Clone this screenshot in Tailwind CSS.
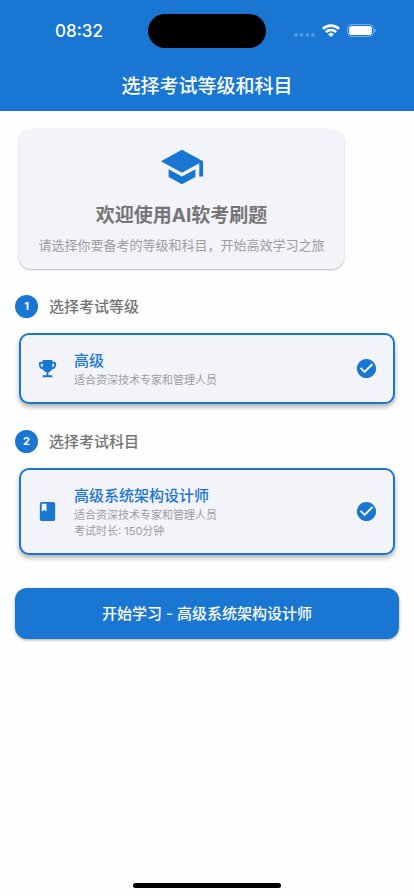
<!DOCTYPE html>
<html lang="zh-CN">
<head>
<meta charset="utf-8">
<meta name="viewport" content="width=device-width, initial-scale=1">
<title>选择考试等级和科目</title>
<script src="https://cdn.jsdelivr.net/npm/@tailwindcss/browser@4"></script>
</head>
<body class="flex min-h-screen flex-col bg-[#fefefe] font-['Inter','Noto_Sans_CJK_SC',sans-serif] text-[#757575]">
  <header class="bg-[#1976d3] text-white">
    <div class="grid h-[61px] grid-cols-[1fr_118px_1fr] items-center">
      <time class="pl-[10px] text-center text-[17px] leading-6 font-medium">08:32</time>
      <div class="h-[34px] rounded-full bg-black"></div>
      <div class="flex items-center justify-end gap-[7px] pr-[38px]">
        <svg class="mt-[9px] h-1 w-[21px]" viewBox="0 0 21 4" fill="#fff" fill-opacity=".25" aria-hidden="true"><circle cx="2" cy="2" r="1.9"/><circle cx="7.6" cy="2" r="1.9"/><circle cx="13.3" cy="2" r="1.9"/><circle cx="19" cy="2" r="1.9"/></svg>
        <svg class="h-[13px] w-[18px]" viewBox="0 0 18 13" fill="none" stroke="#fff" stroke-width="2.6" aria-hidden="true"><path d="M.9 4.9a11.6 11.6 0 0 1 16.2 0"/><path d="M3.9 8.1a7.3 7.3 0 0 1 10.2 0"/><path d="M9 13 6.2 10.2a4 4 0 0 1 5.6 0z" fill="#fff" stroke="none"/></svg>
        <svg class="h-[13px] w-[29px]" viewBox="0 0 29 13" aria-hidden="true"><rect x=".6" y=".5" width="25.8" height="12" rx="4" fill="none" stroke="#fff" stroke-opacity=".4"/><rect x="2.2" y="2" width="22.6" height="9" rx="2.6" fill="#fff"/><path d="M27.5 4.6c1.7.7 1.7 3.3 0 4z" fill="#fff" fill-opacity=".5"/></svg>
      </div>
    </div>
    <h1 class="flex h-[50px] items-center justify-center pt-[2px] text-[19px] font-medium">选择考试等级和科目</h1>
  </header>

  <main class="flex-1 px-[15px] pt-[18px]">
    <section class="mx-1 flex h-[140px] w-[325px] flex-col items-center rounded-xl bg-[#f3f3fa] pt-[15px] shadow-[0_1px_2px_rgba(0,0,0,0.28)]">
      <svg class="size-[46px]" viewBox="0 0 24 24" fill="#1976d3" aria-hidden="true"><path d="M5 13.18v4L12 21l7-3.82v-4L12 17l-7-3.82zM12 3 1 9l11 6 9-4.91V17h2V9L12 3z"/></svg>
      <h2 class="mt-[14px] text-[19px] leading-6 font-bold">欢迎使用AI软考刷题</h2>
      <p class="mt-[7px] text-[13px] leading-5 text-[#9e9e9e]">请选择你要备考的等级和科目，开始高效学习之旅</p>
    </section>

    <form>
      <fieldset class="mt-[26px]">
        <legend class="flex items-center gap-[11px] text-[15px] leading-[23px] font-medium"><span class="flex size-[23px] items-center justify-center rounded-full bg-[#1976d3] text-[11px] font-bold text-white">1</span>选择考试等级</legend>
        <label class="mx-1 mt-[15px] flex h-[71px] items-center rounded-[10px] border-2 border-[#1976d3] bg-[#f3f3fa] px-[15px] shadow-[0_3px_5px_rgba(0,0,0,0.3)]">
          <input class="sr-only" type="radio" name="level" value="senior" checked>
          <svg class="size-[23px]" viewBox="0 0 24 24" fill="#1976d3" aria-hidden="true"><path d="M19 5h-2V3H7v2H5c-1.1 0-2 .9-2 2v1c0 2.55 1.92 4.63 4.39 4.94.63 1.5 1.98 2.63 3.61 2.96V19H7v2h10v-2h-4v-3.1c1.63-.33 2.98-1.46 3.61-2.96C19.08 12.63 21 10.55 21 8V7c0-1.1-.9-2-2-2zM5 8V7h2v3.82C5.84 10.4 5 9.3 5 8zm14 0c0 1.3-.84 2.4-2 2.82V7h2v1z"/></svg>
          <span class="ml-[15px] flex flex-1 flex-col text-[11px] leading-4 text-[#9e9e9e]">
            <span class="text-[15px] leading-[22px] font-medium text-[#1976d3]">高级</span>
            <span>适合资深技术专家和管理人员</span>
          </span>
          <svg class="size-[23px]" viewBox="0 0 24 24" fill="#1976d3" aria-hidden="true"><path d="M12 2C6.48 2 2 6.48 2 12s4.48 10 10 10 10-4.48 10-10S17.52 2 12 2zm-2 15-5-5 1.41-1.41L10 14.17l7.59-7.59L19 8l-9 9z"/></svg>
        </label>
      </fieldset>

      <fieldset class="mt-[26px]">
        <legend class="flex items-center gap-[11px] text-[15px] leading-[23px] font-medium"><span class="flex size-[23px] items-center justify-center rounded-full bg-[#1976d3] text-[11px] font-bold text-white">2</span>选择考试科目</legend>
        <label class="mx-1 mt-[15px] flex h-[87px] items-center rounded-[10px] border-2 border-[#1976d3] bg-[#f3f3fa] px-[15px] shadow-[0_3px_5px_rgba(0,0,0,0.3)]">
          <input class="sr-only" type="radio" name="subject" value="architect" checked>
          <svg class="size-[23px]" viewBox="0 0 24 24" fill="#1976d3" aria-hidden="true"><path d="M18 2H6c-1.1 0-2 .9-2 2v16c0 1.1.9 2 2 2h12c1.1 0 2-.9 2-2V4c0-1.1-.9-2-2-2zM6 4h5v8l-2.5-1.5L6 12V4z"/></svg>
          <span class="ml-[15px] flex flex-1 flex-col text-[11px] leading-4 text-[#9e9e9e]">
            <span class="text-[15px] leading-[22px] font-medium text-[#1976d3]">高级系统架构设计师</span>
            <span>适合资深技术专家和管理人员</span>
            <span>考试时长: 150分钟</span>
          </span>
          <svg class="size-[23px]" viewBox="0 0 24 24" fill="#1976d3" aria-hidden="true"><path d="M12 2C6.48 2 2 6.48 2 12s4.48 10 10 10 10-4.48 10-10S17.52 2 12 2zm-2 15-5-5 1.41-1.41L10 14.17l7.59-7.59L19 8l-9 9z"/></svg>
        </label>
      </fieldset>

      <button type="button" class="mt-[33px] h-[51px] w-full rounded-xl bg-[#1976d3] pt-[2px] text-[15px] font-medium text-white shadow-[0_1px_3px_rgba(0,0,0,0.35)]">开始学习 - 高级系统架构设计师</button>
    </form>
  </main>

  <footer class="flex justify-center pb-2"><div class="h-[5px] w-[148px] rounded-full bg-black"></div></footer>
</body>
</html>
